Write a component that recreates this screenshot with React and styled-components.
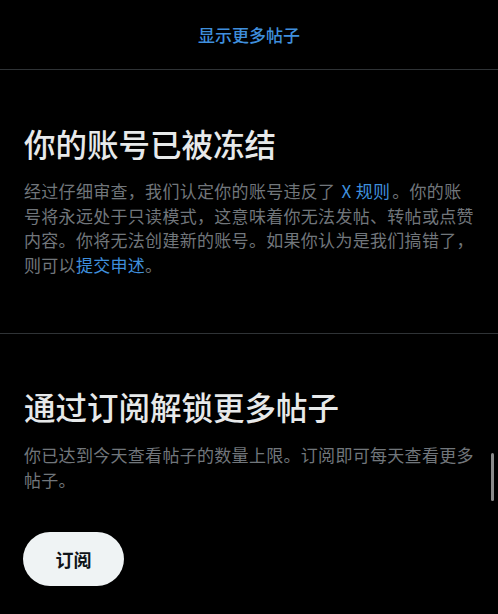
import React from "react"
import styled, { createGlobalStyle } from "styled-components"

const GlobalStyle = createGlobalStyle`
  html, body {
    margin: 0;
    padding: 0;
    background: #000;
  }
  body {
    font-family: "Noto Sans CJK SC", "Noto Sans", sans-serif;
    -webkit-font-smoothing: antialiased;
  }
`

const Page = styled.div`
  position: relative;
  width: 100%;
  min-height: 614px;
  background: #000;
  overflow: hidden;
`

const TopBar = styled.div`
  height: 69px;
  display: flex;
  align-items: center;
  justify-content: center;
  border-bottom: 1px solid #2f3336;
`

const ShowMore = styled.button`
  background: none;
  border: 0;
  padding: 0;
  font-family: inherit;
  font-size: 17px;
  font-weight: 500;
  color: #3f8fdc;
  cursor: pointer;
`

const Section = styled.section`
  padding: ${(p) => p.$top}px 23px ${(p) => p.$bottom}px 24px;
  border-bottom: ${(p) => (p.$divider ? "1px solid #2f3336" : "none")};
`

const Title = styled.h2`
  margin: 0;
  font-size: 31.5px;
  line-height: 40px;
  font-weight: 500;
  color: #e7e9ea;
`

const Body = styled.p`
  margin: ${(p) => p.$gap}px 0 0;
  font-size: 17px;
  letter-spacing: 0.3px;
  line-height: 24.5px;
  color: #71767b;
`

const InlineLink = styled.a`
  color: #3f8fdc;
  text-decoration: none;
  margin: 0 ${(p) => p.$pad || 0}px;
`

const Subscribe = styled.button`
  margin-top: 40px;
  width: 101px;
  height: 54px;
  margin-left: -1px;
  border: 0;
  border-radius: 27px;
  background: #eff3f4;
  color: #0f1419;
  font-family: inherit;
  font-size: 18px;
  font-weight: 600;
  cursor: pointer;
`

const ScrollThumb = styled.div`
  position: absolute;
  right: 4px;
  top: 453px;
  width: 3px;
  height: 48px;
  border-radius: 2px;
  background: #8a8a8a;
`

export default function App() {
  return (
    <>
      <GlobalStyle />
      <Page>
        <TopBar>
          <ShowMore>显示更多帖子</ShowMore>
        </TopBar>

        <Section $top={53} $bottom={56} $divider>
          <Title>你的账号已被冻结</Title>
          <Body $gap={16}>
            经过仔细审查，我们认定你的账号违反了 <InlineLink href="#" $pad={2}>X 规则</InlineLink>。你的账号将永远处于只读模式，这意味着你无法发帖、转帖或点赞内容。你将无法创建新的账号。如果你认为是我们搞错了，则可以<InlineLink href="#">提交申述</InlineLink>。
          </Body>
        </Section>

        <Section $top={52} $bottom={28}>
          <Title>通过订阅解锁更多帖子</Title>
          <Body $gap={17}>你已达到今天查看帖子的数量上限。订阅即可每天查看更多帖子。</Body>
          <Subscribe>订阅</Subscribe>
        </Section>

        <ScrollThumb />
      </Page>
    </>
  )
}
